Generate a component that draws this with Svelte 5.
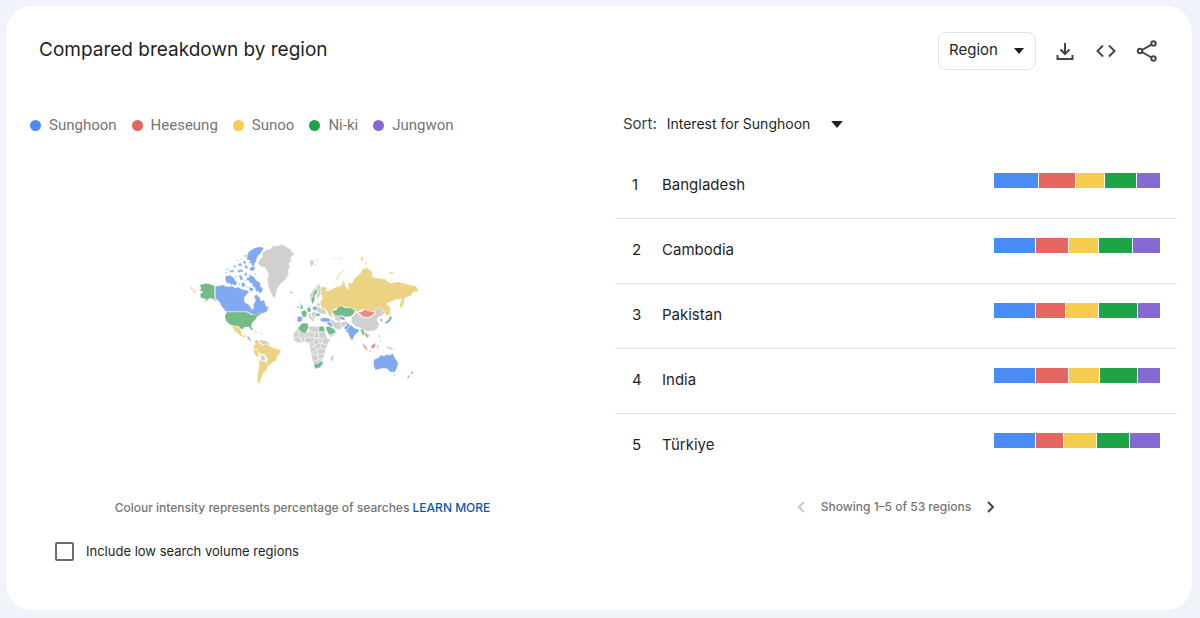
<script>
  const TERMS = [
    { name: "Sunghoon", color: "#4a8cf5" },
    { name: "Heeseung", color: "#e56660" },
    { name: "Sunoo", color: "#f7cd4f" },
    { name: "Ni-ki", color: "#1fa347" },
    { name: "Jungwon", color: "#8669d3" },
  ];

  // share of searches per term, same order as TERMS
  const REGIONS = [
    { name: "Bangladesh", shares: [44, 36, 28, 31, 23] },
    { name: "Cambodia", shares: [41, 32, 29, 33, 27] },
    { name: "Pakistan", shares: [41, 29, 32, 38, 22] },
    { name: "India", shares: [41, 32, 30, 37, 22] },
    { name: "Türkiye", shares: [41, 27, 32, 32, 30] },
  ];

  const FILL = {
    blue: "#80a9f1",
    red: "#e78d88",
    yellow: "#ecd384",
    green: "#76ba8a",
    gray: "#d0d0d0",
  };

  const AMERICAS = [
    ["green", "M42 150 60 145 74 147 88 152V190L96 204 84 192 72 190 56 205 62 193 46 188 44 177 53 171 42 165 48 160Z"],
    ["yellow", "M13 154 23 159 22 166 16 162ZM20 164 28 168 34 162 29 175 23 172Z"],
    ["blue", "M90 154 112 150 128 155 140 153 150 159 158 156 166 161 176 164 192 168 186 177 176 188 178 202 192 210 200 224 205 220 204 208 211 197 206 182 214 179 224 188 226 198 236 195 242 212 248 220 246 228 236 234 226 236 214 243 200 238 186 230H122L108 213 103 202 90 190Z"],
    ["blue", "M186 60 190 50 206 40 222 35 236 38 228 52 217 64 212 78 206 92 198 96 200 84 192 88 194 76 184 74ZM176 62 183 58 182 68ZM174 76 182 80 180 88 174 84ZM176 90 186 92 188 102 180 100ZM192 100 204 94 210 98 204 108 194 106ZM184 128 192 126 190 118 200 122 208 128 212 136 220 140 226 146 224 152 233 162 230 170 224 176 218 168 212 170 208 156 200 154 202 146 194 144 190 136 184 136ZM120 124 134 121 146 128 148 136 156 142 150 153 142 148 138 152 134 144 126 146 120 136ZM160 122 168 120 174 134 166 136ZM156 106 164 104 170 102 174 112 166 110 160 114ZM132 106 140 106 146 103 144 113 140 110 134 114ZM158 86 168 84 170 92 160 94ZM170 140 180 146 176 158 168 152ZM190 156 204 160 202 170 192 166ZM122 104 128 98 130 104ZM142 93 152 90 150 99ZM176 116 184 112 186 122 178 122ZM152 120 156 130 150 126ZM118 112 124 110 123 116ZM154 76 160 74 158 80ZM166 72 170 70 170 76ZM178 132 182 136 178 140ZM160 142 165 146 160 150ZM208 114 214 118 208 120ZM182 152 187 156 183 160ZM244 214 252 217 247 222Z"],
    ["gray", "M218 82 232 64 230 56 240 46 256 42 262 32 274 34 290 28 304 36 316 42 318 50 328 58 316 66 318 76 310 86 314 96 308 104 310 116 300 134 284 148 276 160 270 186 264 188 256 172 248 152 246 134 250 118 240 98 224 94ZM311 174 317 169 324 171 320 177Z"],
    ["green", "M124 231H184L198 239 211 239 228 230 230 235 216 244 212 252 200 264 198 274 203 284 199 287 191 276 177 277 169 284 159 274 146 273 132 268 122 258 118 244Z"],
    ["yellow", "M139 272 158 275 168 287 168 299 175 302 183 296 182 304 176 308 162 301 154 290 158 298 148 287Z"],
    ["blue", "M184 304 192 305 194 314 200 316 196 319 188 312Z"],
    ["gray", "M202 287 212 288 220 293 214 293ZM224 294 232 295 228 299ZM219 317 230 315 241 317 253 324 247 330 232 329Z"],
    ["yellow", "M207 317 218 314 221 324 231 329 229 342 214 343 202 341 209 328Z"],
    ["yellow", "M222 331 233 331 246 326 255 335 284 344 287 351 276 364 272 378 261 382 250 395 243 386 247 371 239 359 223 356 215 344Z"],
    ["yellow", "M203 342 216 345 220 357 220 370 208 358Z"],
    ["gray", "M225 359 238 363 241 374 228 378ZM239 377 247 384 242 388Z"],
    ["yellow", "M219 369 226 378 239 379 248 393 244 406 233 414 228 430 223 445 216 444 218 410 222 390ZM222 447 228 449 223 451Z"],
  ];

  const EURASIA = [
    ["yellow", "M408 154 426 158 422 168 434 166 452 156 468 152 476 132 480 154 490 164 488 140 500 146 508 128 526 114 530 104 544 98 562 112 560 126 578 130 598 132 614 144 640 140 670 149 692 153 700 168 682 172 680 180 658 190 655 208 646 223 643 208 650 192 630 194 614 202 602 206 616 218 614 236 604 242 590 222 572 228 556 230 538 222 516 230 496 218 466 214 444 224 440 236 444 248 432 244 424 226 408 218 404 202 412 190 406 176Z"],
    ["yellow", "M450 138 458 120 474 106 482 104 466 116 456 132ZM526 63 534 68 532 80 527 76ZM537 78 545 84 544 91ZM608 111 620 112 630 115 616 118ZM438 69 448 67 446 72ZM454 70 464 68 476 64 460 72Z"],
    ["gray", "M372 80 380 74 386 78 384 88 378 96ZM388 74 400 72 394 78ZM388 84 394 90 388 94Z"],
    ["gray", "M392 154 402 146 407 162 405 180 397 192 393 182 398 172ZM376 196 374 180 384 164 396 150 386 172 380 192Z"],
    ["green", "M386 170 394 160 396 172 388 182 388 196 381 208 377 196 382 184Z"],
    ["green", "M344 201 348 208 354 218 351 222 344 222 346 212ZM336 214 340 212 341 220 336 220ZM369 210 374 212 372 218Z"],
    ["green", "M347 230 358 225 365 231 363 246 352 246ZM365 219 375 217 377 230 367 232Z"],
    ["blue", "M381 216 394 214 396 225 384 226ZM336 244 352 246 350 258 341 262 336 259Z"],
    ["gray", "M396 216 408 220 420 226 424 236 408 237 395 230ZM368 236 376 234 378 244 388 256 382 260 370 246ZM380 230 390 229 392 242 386 252 378 241ZM399 201 405 210 401 216 394 210Z"],
    ["green", "M391 234 404 236 403 244 392 243Z"],
    ["blue", "M404 252 414 248 428 249 436 253 434 260 418 261 406 259ZM426 262 436 261 443 273 438 275 425 267ZM458 242 476 246 480 256 468 254ZM472 238 480 244 476 246Z"],
    ["green", "M441 227 453 224 458 216 470 213 478 218 496 218 510 227 506 235 498 244 482 246 472 242 460 242 452 246 444 236Z"],
    ["gray", "M434 254 444 256 450 262 464 260 470 278 462 284 449 280 440 268ZM446 240 458 243 468 255 460 260 449 254ZM465 262 482 258 488 264 474 276 468 276Z"],
    ["red", "M518 230 528 231 538 223 548 227 556 229 570 232 560 242 546 248 530 244Z"],
    ["gray", "M500 246 514 232 528 245 546 250 562 243 572 235 566 230 574 220 584 216 598 233 590 242 580 246 574 254 582 268 574 284 562 288 542 289 528 280 512 275 498 262Z"],
    ["blue", "M475 280 488 264 495 271 488 278 486 286ZM488 278 498 270 507 279 522 284 518 292 508 300 500 319 494 308 488 293 480 288Z"],
    ["green", "M525 285 532 281 538 293 536 304 531 298ZM586 250 592 254 590 261 585 256ZM598 263 606 257 614 246 616 240 620 249 613 260 602 267Z"],
    ["red", "M538 292 546 296 551 307 546 308 540 302ZM530 324 540 332 548 344 542 344 534 334ZM557 332 570 324 570 334 564 341 557 338ZM548 346 560 348 552 350ZM574 332 580 330 577 342ZM606 332 612 336 608 342Z"],
    ["gray", "M545 292 554 301 552 309ZM578 300 584 301 584 310 580 308ZM584 314 590 320 584 321ZM600 332 614 335 628 343 614 344Z"],
    ["green", "M337 280 350 265 367 264 370 278 359 297 350 294ZM401 274 415 274 419 290H401ZM420 276 431 274 446 282 453 292 440 298 430 299Z"],
    ["gray", "M372 273 400 275V290L388 294 371 286ZM323 298 337 281 358 298 370 287 388 295 400 291 419 291 426 312 436 313 424 332 419 350 416 366 410 374 402 382 388 390 381 376 378 358 374 340 372 325 360 320 340 324 327 318ZM434 370 444 359 446 368 439 382ZM431 299 440 299 450 294 445 302 434 307ZM506 318 510 323 507 326Z"],
    ["green", "M385 389 400 384 410 376 413 387 403 398 389 401Z"],
    ["blue", "M565 374 579 368 587 360 596 363 606 358 614 361 622 355 629 369 639 385 635 399 628 412 615 411 605 401 592 400 571 405 565 394ZM624 419 631 419 628 424Z"],
    ["green", "M666 426 674 418 673 424 667 432ZM676 414 681 408 684 411 678 419Z"],
  ];

  const COUNTRIES = [...AMERICAS, ...EURASIA];

  // state lines across the African landmass
  const BORDERS =
    "M325 309 338 306 346 310 358 301M338 288 344 306M342 323 346 310 353 321M357 320 359 301M372 290 370 305 360 312M388 295 386 308 371 307M401 292 400 308 386 310M372 325 384 318 400 309 420 310M384 318 386 334 375 338M400 309 402 324 386 330M402 324 424 330M410 312 410 326M386 334 396 343 378 354M396 343 408 340 422 344M408 340 406 328M396 343 398 358 379 360M398 358 418 356M398 358 399 374 384 380M399 374 412 370";

  let regionLevel = $state("Region");
  let sortBy = $state("Sunghoon");
  let includeLow = $state(false);
</script>

<main class="card">
  <header>
    <h1>Compared breakdown by region</h1>
    <div class="tools">
      <div class="select region">
        <select bind:value={regionLevel} aria-label="Resolution">
          <option>Region</option>
          <option>City</option>
        </select>
        <svg class="caret" viewBox="0 0 10 6"><path d="M0 0h10L5 6z" /></svg>
      </div>
      <button class="icon-btn" aria-label="Download">
        <svg viewBox="0 0 24 24"><path d="M12 4v11M7.500 10.500l4.500 4.500 4.500-4.500M4.500 16v4h15v-4" /></svg>
      </button>
      <button class="icon-btn" aria-label="Embed">
        <svg viewBox="0 0 24 24"><path d="M9 6.500 3.500 12 9 17.500M15 6.500 20.500 12 15 17.500" /></svg>
      </button>
      <button class="icon-btn" aria-label="Share">
        <svg viewBox="0 0 24 24">
          <path d="M7 11 16.500 5.700M7 13l9.500 5.500" />
          <circle cx="5" cy="12" r="2.200" />
          <circle cx="18.500" cy="4.500" r="2.200" />
          <circle cx="18.500" cy="19.500" r="2.200" />
        </svg>
      </button>
    </div>
  </header>

  <div class="columns">
    <section class="left">
      <ul class="legend">
        {#each TERMS as term}
          <li><span class="dot" style="background:{term.color}"></span>{term.name}</li>
        {/each}
      </ul>

      <svg class="map" viewBox="-7 0 720 465" role="img" aria-label="World map">
        {#each COUNTRIES as [fill, d]}
          <path {d} fill={FILL[fill]} />
        {/each}
        <path class="borders" d={BORDERS} />
      </svg>

      <p class="note">Colour intensity represents percentage of searches <a href="#learn">LEARN MORE</a></p>

      <label class="low-volume">
        <input type="checkbox" bind:checked={includeLow} />
        Include low search volume regions
      </label>
    </section>

    <section class="right">
      <div class="sort">
        <label for="sort">Sort:</label>
        <div class="select">
          <select id="sort" bind:value={sortBy}>
            {#each TERMS as term}
              <option value={term.name}>Interest for {term.name}</option>
            {/each}
          </select>
          <svg class="caret" viewBox="0 0 10 6"><path d="M0 0h10L5 6z" /></svg>
        </div>
      </div>

      <ol class="regions">
        {#each REGIONS as region, i}
          <li>
            <span class="rank">{i + 1}</span>
            <span class="name">{region.name}</span>
            <span class="bar">
              {#each region.shares as share, t}
                <span style="flex-grow:{share};background:{TERMS[t].color}"></span>
              {/each}
            </span>
          </li>
        {/each}
      </ol>

      <nav class="pager">
        <button aria-label="Previous" disabled>
          <svg viewBox="0 0 12 14"><path d="M9 2 4 7l5 5" /></svg>
        </button>
        <span>Showing 1–5 of 53 regions</span>
        <button aria-label="Next">
          <svg viewBox="0 0 12 14"><path d="M3 2l5 5-5 5" /></svg>
        </button>
      </nav>
    </section>
  </div>
</main>

<style>
  :global(body) {
    background: #f1f3fa;
    font-family: Inter, "Open Sans", sans-serif;
    color: #1f1f1f;
  }

  .card {
    box-sizing: border-box;
    margin: 6px 8px 7px 6px;
    padding: 26px 0 48px;
    background: #fff;
    border-radius: 26px;
  }

  header {
    display: flex;
    align-items: center;
    justify-content: space-between;
    padding: 0 33px;
  }

  h1 {
    margin: 0;
    padding-bottom: 2px;
    font-size: 19px;
    line-height: 28px;
    font-weight: 400;
  }

  .tools {
    display: flex;
    align-items: center;
    gap: 17px;
  }

  .select {
    position: relative;
    display: flex;
    align-items: center;
  }

  select {
    appearance: none;
    border: 0;
    background: none;
    padding: 0 32px 0 0;
    margin: 0;
    font: inherit;
    font-size: 14px;
    line-height: 24px;
    color: #1f1f1f;
  }

  .caret {
    position: absolute;
    right: 0;
    width: 12px;
    height: 7px;
    fill: #1f1f1f;
    pointer-events: none;
  }

  .region select {
    width: 98px;
    height: 38px;
    padding: 0 0 2px 10px;
    border: 1px solid #e2e3e5;
    border-radius: 8px;
    font-size: 15px;
  }

  .region .caret {
    right: 12px;
    width: 10px;
    height: 6px;
  }

  button {
    padding: 0;
    border: 0;
    background: none;
    color: #444746;
    cursor: pointer;
  }

  button svg {
    display: block;
    fill: none;
    stroke: currentColor;
    stroke-width: 2;
  }

  .icon-btn svg {
    width: 24px;
    height: 24px;
  }

  .columns {
    display: grid;
    grid-template-columns: 1fr 1fr;
    padding-top: 42px;
  }

  .left {
    display: flex;
    flex-direction: column;
    align-items: center;
  }

  .legend {
    align-self: stretch;
    display: flex;
    gap: 15px;
    margin: 0;
    padding: 0 24px;
    list-style: none;
    font-family: Roboto, sans-serif;
    font-size: 15px;
    line-height: 26px;
    color: #757575;
  }

  .legend li {
    display: flex;
    align-items: center;
    gap: 8px;
  }

  .dot {
    width: 11px;
    height: 11px;
    border-radius: 50%;
  }

  .map {
    width: 240px;
    height: 155px;
    margin-top: 97px;
    stroke: #fff;
    stroke-width: 1;
    stroke-linejoin: round;
  }

  .borders {
    fill: none;
    stroke-width: 2;
  }

  .note {
    margin: 108px 0 0;
    font-size: 12px;
    line-height: 20px;
    font-weight: 500;
    color: #757575;
  }

  .note a {
    color: #0b57b0;
    text-decoration: none;
  }

  .low-volume {
    align-self: flex-start;
    display: flex;
    align-items: center;
    gap: 12px;
    margin: 22px 0 0 49px;
    font-size: 13px;
    line-height: 22px;
  }

  .low-volume input {
    appearance: none;
    box-sizing: border-box;
    width: 19px;
    height: 19px;
    margin: 0;
    border: 2px solid #6b6b6b;
    border-radius: 2px;
  }

  .low-volume input:checked { background: #0b57b0; }

  .right { padding: 0 15px 0 16px; }

  .sort {
    display: flex;
    align-items: center;
    gap: 10px;
    padding-left: 8px;
    font-size: 15px;
    line-height: 24px;
    color: #3c4043;
  }

  .regions {
    margin: 18px 0 0;
    padding: 0;
    list-style: none;
    font-size: 15px;
  }

  .regions li {
    display: flex;
    align-items: center;
    box-sizing: border-box;
    height: 65px;
    padding: 0 17px 4px;
    border-bottom: 1px solid #e0e0e0;
  }

  .regions li:last-child { border-bottom: 0; }

  .rank { width: 30px; }
  .name { flex: 1; }

  .bar {
    display: flex;
    gap: 1px;
    width: 166px;
    height: 15px;
    margin-bottom: 8px;
  }

  .pager {
    display: flex;
    align-items: center;
    justify-content: center;
    gap: 14px;
    margin-top: 18px;
    font-size: 12px;
    line-height: 20px;
    font-weight: 500;
    color: #757575;
  }

  .pager svg {
    width: 12px;
    height: 14px;
  }

  .pager button:disabled { color: #c8c8c8; }
</style>
